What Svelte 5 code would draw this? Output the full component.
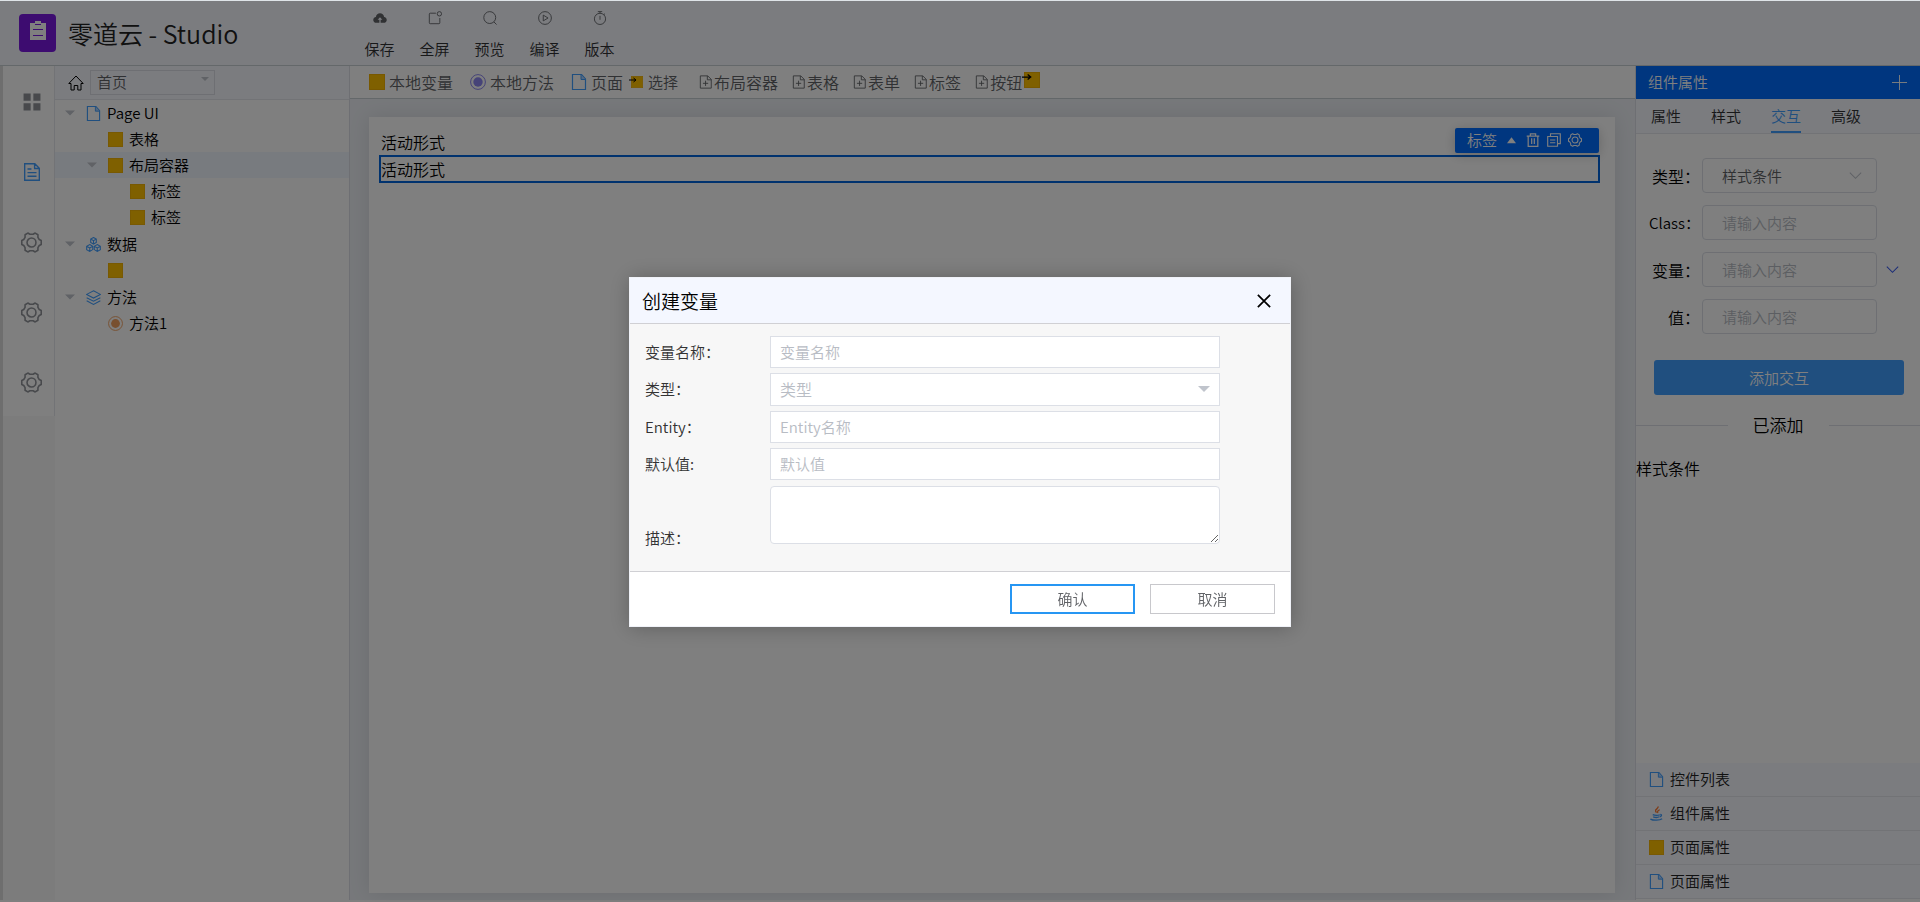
<script>
  const tools = [
    { icon: 'cloud', label: '保存' },
    { icon: 'full', label: '全屏' },
    { icon: 'search', label: '预览' },
    { icon: 'play', label: '编译' },
    { icon: 'timer', label: '版本' }
  ];

  const rail = ['grid', 'article', 'gear', 'gear', 'gear'];

  const tree = [
    [
      { level: 0, icon: 'doc', label: 'Page UI', open: true },
      { level: 1, icon: 'square', label: '表格' },
      { level: 1, icon: 'square', label: '布局容器', open: true, active: true },
      { level: 2, icon: 'square', label: '标签' },
      { level: 2, icon: 'square', label: '标签' }
    ],
    [
      { level: 0, icon: 'cubes', label: '数据', open: true },
      { level: 1, icon: 'square', label: '' }
    ],
    [
      { level: 0, icon: 'layers', label: '方法', open: true },
      { level: 1, icon: 'method', label: '方法1' }
    ]
  ];

  const widgets = ['布局容器', '表格', '表单', '标签', '按钮'];
  const tabs = ['属性', '样式', '交互', '高级'];

  const panels = [
    { icon: 'doc', label: '控件列表' },
    { icon: 'java', label: '组件属性' },
    { icon: 'square', label: '页面属性' },
    { icon: 'doc', label: '页面属性' }
  ];

  let activeTab = $state('交互');
  let showDialog = $state(true);

  const close = () => (showDialog = false);
</script>

{#snippet icon(name, size = 15)}
  <svg class="icon {name}" width={size} height={size} viewBox="0 0 16 16" fill="none" stroke="currentColor" stroke-width="1" aria-hidden="true">
    {#if name === 'square'}
      <rect x="0.5" y="0.5" width="15" height="15" fill="#ffc000" stroke="#f0b000" />
    {:else if name === 'doc'}
      <path d="M1.5 .5h9l4 4.5v10.5h-13z" stroke-width="1.2" />
      <path d="M10 .8V5.5h4.5" fill="#a8d0ff" />
    {:else if name === 'docplus'}
      <path d="M1.5 1h8.500l4 4v10h-12.500zM9.500 1v4.500H14M7.500 6.500v6M4.500 9.500h6" />
    {:else if name === 'method'}
      <circle cx="8" cy="8" r="7.400" />
      <circle cx="8" cy="8" r="4.700" fill="currentColor" stroke="none" />
    {:else if name === 'cloud'}
      <path d="M4 13.500C1.500 13.500.3 12 .3 10.200S1.600 7 3.300 6.800C3.700 4.200 5.600 2.700 8 2.700s4.300 1.500 4.700 4.100c1.700.2 3 1.600 3 3.400s-1.200 3.300-3.700 3.300H8.700V10h2L8 7.200 5.300 10h2v3.500z" fill="currentColor" stroke="none" />
    {:else if name === 'full'}
      <path d="M9 2.500H2.500a1 1 0 0 0-1 1v10a1 1 0 0 0 1 1h10a1 1 0 0 0 1-1V8" />
      <circle cx="13" cy="3.200" r="2.500" />
    {:else if name === 'search'}
      <circle cx="7.700" cy="7.500" r="6.800" />
      <path d="M12.500 12.500l3 3" />
    {:else if name === 'play'}
      <circle cx="8" cy="8" r="7.300" />
      <path d="M6 4.700v6.600L11.500 8z" />
    {:else if name === 'timer'}
      <circle cx="8" cy="9" r="6.400" />
      <path d="M5.500 .7h5M8 .7v2M8 5.500v4.500M12.500 3l1.200 1" />
    {:else if name === 'grid'}
      <path d="M.5.500h6.300v6.300H.5zM9.200.500h6.300v6.300H9.200zM.5 9.200h6.300v6.300H.5zM9.200 9.200h6.300v6.300H9.200z" fill="currentColor" stroke="none" />
    {:else if name === 'article'}
      <path d="M1.500.7h9l4 4v10.600h-13zM10.300.8v4.100h4M4 5.300h3.500M4 8.500h8M4 11.800h8" stroke-width="1.200" />
    {:else if name === 'gear'}
      <path d="M5.200.8L6.800 1.700h2.400L10.800.8l2.100 1.300v2l1 1.600 1.500.8v3l-1.500.8-1 1.600v2l-2.100 1.300-1.600-.9H6.800l-1.600.9-2.100-1.300v-2l-1-1.600-1.500-.8v-3l1.500-.8 1-1.600v-2z" stroke-width="1.200" stroke-linejoin="round" />
      <circle cx="8" cy="8" r="3.400" stroke-width="1.200" />
    {:else if name === 'cubes'}
      <path d="M8 .5l3 1.700v3.500L8 7.500 5 5.700V2.200zM5 2.200l3 1.700 3-1.700M8 3.900v3.600M4 8l3.200 1.800v3.600L4 15.400.7 13.500V9.800zM.7 9.800L4 11.600l3.200-1.800M4 11.600v3.800M12 8l3.300 1.800v3.700L12 15.400l-3.200-2V9.800zM8.800 9.800l3.200 1.800 3.300-1.800M12 11.600v3.800" stroke-width="1.100" />
    {:else if name === 'layers'}
      <path d="M8 .8l7.300 3.900L8 8.600.7 4.700zM.7 8.200L8 12l7.300-3.800M.7 11.500L8 15.400l7.300-3.900" stroke-width="1.100" />
    {:else if name === 'java'}
      <path d="M9.500.5c1.500 2-3.500 3-2.500 5l1 1.500M11.500 4c-2 .8-3 1.800-2 3.500" stroke="#ff7a30" stroke-width="1.400" />
      <path d="M4 9.300c2 .8 6 .8 7.500 0M12 9c2 .2 1.500 2-.5 2.500M4.500 11.500c2 .8 5 .8 6.500 0M1.500 14c3 1.600 10 1.600 12.500-.3" stroke-width="1.400" />
    {:else if name === 'home'}
      <path d="M.8 8.500L8 1l7.200 7.500H13V15H9.800v-4.500H6.200V15H3V8.500z" stroke-width="1" />
    {:else if name === 'trash'}
      <path d="M.8 3.500h14.400M2.500 3.500v11.700h11V3.500M5 3.500V1h6v2.500M6.500 6v6.500M9.500 6v6.500" stroke-width="1.400" />
    {:else if name === 'copy'}
      <path d="M4 4V.8h11.200v11.400H12M.8 4H12v11.200H.8zM3.500 8h6M3.500 11.200h6" stroke-width="1.300" />
    {:else if name === 'caret'}
      <path d="M0 4h16L8 12z" fill="currentColor" stroke="none" />
    {:else if name === 'caretup'}
      <path d="M0 13h16L8 2z" fill="currentColor" stroke="none" />
    {:else if name === 'chevron'}
      <path d="M1 4.500l7 7 7-7" stroke-width="1.300" />
    {:else if name === 'plus'}
      <path d="M8 0v16M0 8h16" />
    {:else if name === 'close'}
      <path d="M1 1l14 14M15 1L1 15" stroke-width="2" />
    {:else if name === 'arrow'}
      <path d="M0 8h14M9 4l5 4-5 4" stroke-width="2" />
    {/if}
  </svg>
{/snippet}

<div class="studio">
  <header>
    <div class="logo">
      <svg width="37" height="38" viewBox="0 0 37 38" aria-hidden="true">
        <path d="M11 9h5V7h6v2h5v17H11z" fill="#fff" />
        <path d="M16 10.500h6M14 15.500h10M14 21.500h10" stroke="#7a18e0" stroke-width="1.200" />
      </svg>
    </div>
    <h1>零道云 - Studio</h1>
    <nav class="tools">
      {#each tools as tool}
        <button>{@render icon(tool.icon, 14)}<span>{tool.label}</span></button>
      {/each}
    </nav>
  </header>

  <div class="workspace">
    <aside class="rail">
      <nav>
        {#each rail as name, i}
          <button class:current={i === 1} aria-label="菜单{i + 1}">{@render icon(name, i < 2 ? 18 : 21)}</button>
        {/each}
      </nav>
    </aside>

    <aside class="sidebar">
      <div class="page-bar">
        {@render icon('home', 16)}
        <div class="select page-select">
          <select aria-label="页面"><option>首页</option></select>
          {@render icon('caret', 8)}
        </div>
      </div>
      <div class="tree">
        {#each tree as group}
          <div>
            {#each group as node}
              <div class="node level{node.level}" class:active={node.active}>
                <span class="toggle">{#if node.open}{@render icon('caret', 10)}{/if}</span>
                {@render icon(node.icon, 15)}
                <span>{node.label}</span>
              </div>
            {/each}
          </div>
        {/each}
      </div>
    </aside>

    <main>
      <div class="toolbar">
        <button>{@render icon('square', 16)}本地变量</button>
        <button class="purple">{@render icon('method', 16)}本地方法</button>
        <button class="page">{@render icon('doc', 16)}页面</button>
        <button class="choose"><span class="mark">{@render icon('square', 12)}{@render icon('arrow', 8)}</span>选择</button>
        <div class="widgets">
          {#each widgets as widget}
            <button>{@render icon('docplus', 14)}{widget}</button>
          {/each}
          <span class="mark drag">{@render icon('square', 16)}{@render icon('arrow', 10)}</span>
        </div>
      </div>
      <div class="stage">
        <div class="paper">
          <div class="line">活动形式</div>
          <div class="line selected">
            活动形式
            <div class="actions">
              <span>标签</span>
              <button aria-label="上级">{@render icon('caretup', 9)}</button>
              <button aria-label="删除">{@render icon('trash', 14)}</button>
              <button aria-label="复制">{@render icon('copy', 14)}</button>
              <button aria-label="设置">{@render icon('gear', 14)}</button>
            </div>
          </div>
        </div>
      </div>
    </main>

    <aside class="props">
      <div class="props-title">组件属性 {@render icon('plus', 15)}</div>
      <div class="tabs">
        {#each tabs as tab}
          <button class:on={activeTab === tab} onclick={() => (activeTab = tab)}>{tab}</button>
        {/each}
      </div>
      <form class="props-form">
        <div class="field">
          <label for="kind">类型：</label>
          <div class="select">
            <select id="kind"><option>样式条件</option></select>
            {@render icon('chevron', 13)}
          </div>
        </div>
        <div class="field">
          <label for="cls">Class：</label>
          <input id="cls" placeholder="请输入内容" />
        </div>
        <div class="field">
          <label for="variable">变量：</label>
          <input id="variable" placeholder="请输入内容" />
          <button type="button" class="more" aria-label="展开">{@render icon('chevron', 13)}</button>
        </div>
        <div class="field">
          <label for="val">值：</label>
          <input id="val" placeholder="请输入内容" />
        </div>
        <button type="button" class="add">添加交互</button>
      </form>
      <div class="divider">已添加</div>
      <div class="added">样式条件</div>
      <div class="panels">
        {#each panels as panel}
          <button>{@render icon(panel.icon, 15)}{panel.label}</button>
        {/each}
      </div>
    </aside>
  </div>
</div>

{#if showDialog}
  <div class="mask">
    <div class="dialog" role="dialog" aria-labelledby="dialog-title">
      <div class="dialog-head">
        <h2 id="dialog-title">创建变量</h2>
        <button aria-label="关闭" onclick={close}>{@render icon('close', 14)}</button>
      </div>
      <div class="dialog-body">
        <div class="row">
          <label for="d-name">变量名称：</label>
          <input id="d-name" placeholder="变量名称" />
        </div>
        <div class="row">
          <label for="d-type">类型：</label>
          <div class="select">
            <select id="d-type"><option>类型</option></select>
            {@render icon('caret', 12)}
          </div>
        </div>
        <div class="row">
          <label for="d-entity">Entity：</label>
          <input id="d-entity" placeholder="Entity名称" />
        </div>
        <div class="row">
          <label for="d-default">默认值:</label>
          <input id="d-default" placeholder="默认值" />
        </div>
        <div class="row tall">
          <label for="d-desc">描述：</label>
          <textarea id="d-desc"></textarea>
        </div>
      </div>
      <div class="dialog-foot">
        <button class="primary" onclick={close}>确认</button>
        <button onclick={close}>取消</button>
      </div>
    </div>
  </div>
{/if}

<style>
  :global(body) {
    margin: 0;
    background: #fff;
    font: 350 15px/20px "Noto Sans CJK SC", "Open Sans", sans-serif;
    color: #000;
  }

  * {
    box-sizing: border-box;
  }

  button,
  input,
  select,
  textarea {
    font: inherit;
    color: inherit;
    margin: 0;
  }

  button {
    padding: 0;
    border: 0;
    background: none;
    cursor: pointer;
  }

  .icon {
    display: block;
    flex: none;
  }

  .doc,
  .cubes,
  .layers,
  .java {
    color: #409eff;
  }

  .studio {
    display: flex;
    flex-direction: column;
    height: 100vh;
    padding-bottom: 2px;
    border-top: 1px solid #dfe4e8;
  }

  /* header */
  header {
    display: flex;
    align-items: center;
    height: 65px;
    padding-left: 19px;
    background: #f6f8ff;
    border-bottom: 1px solid #c8d0d4;
  }

  .logo {
    width: 37px;
    height: 38px;
    border-radius: 4px;
    overflow: hidden;
    background: #7a18e0;
  }

  h1 {
    width: 284px;
    margin: 0 0 0 12px;
    font-size: 25px;
    font-weight: 350;
    line-height: 36px;
    color: #222;
  }

  .tools {
    display: flex;
    align-self: stretch;
  }

  .tools button {
    display: flex;
    flex-direction: column;
    align-items: center;
    gap: 14px;
    width: 55px;
    padding-top: 10px;
    color: #303133;
  }

  .tools .icon {
    color: #606266;
  }

  .workspace {
    display: flex;
    flex: 1;
    min-height: 0;
  }

  /* left rail */
  .rail {
    width: 55px;
    border-left: 3px solid #dcdcdc;
    background: #f9f9f9;
  }

  .rail nav {
    background: #fefefe;
    border-right: 1px solid #e4e7ed;
  }

  .rail button {
    display: grid;
    place-items: center;
    width: 100%;
    height: 70px;
    padding: 2px 4px 0 10px;
    color: #909399;
  }

  .rail .current {
    color: #409eff;
  }

  /* page tree */
  .sidebar {
    width: 295px;
    border-right: 1px solid #dcdfe6;
  }

  .page-bar {
    display: flex;
    align-items: center;
    gap: 6px;
    height: 34px;
    padding-left: 13px;
    background: #f6f8ff;
    border-bottom: 1px solid #e4e7ed;
  }

  .select {
    position: relative;
  }

  .select select {
    appearance: none;
    width: 100%;
    border: 1px solid #dcdfe6;
    background: #fff;
    color: #606266;
  }

  .select .icon {
    position: absolute;
    color: #c0c4cc;
    pointer-events: none;
  }

  .page-select select {
    width: 125px;
    height: 25px;
    padding: 0 6px 2px;
    background: #f6f8ff;
  }

  .page-select .icon {
    top: 5px;
    right: 6px;
  }

  .tree {
    display: flex;
    flex-direction: column;
    gap: 1px;
  }

  .node {
    display: flex;
    align-items: center;
    gap: 6px;
    height: 26px;
    padding-left: 10px;
  }

  .node.level1 {
    padding-left: 32px;
  }

  .node.level2 {
    padding-left: 54px;
  }

  .node.active {
    background: #f0f7ff;
  }

  .toggle {
    width: 15px;
    color: #c0c4cc;
  }

  .node .method {
    color: #f0a060;
  }

  /* designer */
  main {
    display: flex;
    flex: 1;
    flex-direction: column;
    min-width: 0;
  }

  .toolbar {
    display: flex;
    align-items: center;
    gap: 17px;
    height: 33px;
    padding: 0 0 1px 19px;
    border-bottom: 1px solid #c8d0d4;
    font-size: 16px;
    color: #606266;
    white-space: nowrap;
  }

  .toolbar button {
    display: flex;
    align-items: center;
    gap: 4px;
  }

  .toolbar .page {
    margin-right: -9px;
  }

  .toolbar .choose {
    gap: 5px;
    font-size: 15px;
  }

  .purple .icon {
    color: #8c86f0;
  }

  .widgets {
    display: flex;
    gap: 14px;
    margin-left: 4px;
  }

  .widgets button {
    gap: 1px;
  }

  .mark {
    position: relative;
  }

  .mark .arrow {
    position: absolute;
    top: 0;
    left: -2px;
    color: #000;
  }

  .drag {
    margin-left: -12px;
  }

  .stage {
    display: flex;
    flex: 1;
    padding: 18px 20px 7px 19px;
    background: #eef1f6;
  }

  .paper {
    flex: 1;
    padding: 12px 15px 0 10px;
    background: #fff;
    box-shadow: 0 0 20px rgba(0, 0, 0, 0.1);
  }

  .line {
    padding: 0 2px;
    font-size: 16px;
    line-height: 26px;
  }

  .selected {
    position: relative;
    padding: 0;
    border: 2px solid #0064dc;
    line-height: 24px;
  }

  .actions {
    position: absolute;
    top: -29px;
    right: -1px;
    display: flex;
    align-items: center;
    gap: 7px;
    width: 144px;
    height: 25px;
    padding: 0 0 1px 12px;
    border-radius: 2px;
    background: #006cff;
    box-shadow: 0 2px 12px rgba(0, 0, 0, 0.2);
    color: #fff;
    font-size: 15px;
  }

  .actions span,
  .actions button:first-of-type {
    margin-right: 3px;
  }

  /* properties */
  .props {
    display: flex;
    flex-direction: column;
    width: 285px;
    padding-bottom: 1px;
    border-left: 1px solid #dcdfe6;
  }

  .props-title {
    display: flex;
    align-items: center;
    justify-content: space-between;
    height: 33px;
    padding: 0 13px 1px 12px;
    background: #006cff;
    color: #fff;
  }

  .tabs {
    display: flex;
    gap: 30px;
    height: 35px;
    padding-left: 15px;
    background: #f6f8ff;
    border-bottom: 1px solid #e4e7ed;
  }

  .tabs button {
    padding-top: 2px;
    border-bottom: 2px solid transparent;
    color: #303133;
  }

  .tabs .on {
    border-color: #409eff;
    color: #409eff;
  }

  .props-form {
    display: flex;
    flex-direction: column;
    gap: 12px;
    padding: 24px 16px 0 12px;
  }

  .field {
    display: flex;
    align-items: center;
  }

  .field label {
    width: 54px;
    padding-right: 2px;
    font-size: 16px;
    text-align: right;
    white-space: nowrap;
  }

  .field label[for="cls"] {
    font-size: 15px;
  }

  .field .select,
  .field input {
    width: 175px;
  }

  .field select,
  .field input {
    height: 35px;
    padding: 0 19px;
    border: 1px solid #dcdfe6;
    border-radius: 4px;
    background: #fff;
  }

  .field .select .icon {
    top: 11px;
    right: 15px;
  }

  .field .more {
    margin-left: 9px;
    color: #3a5cf0;
  }

  input::placeholder {
    color: #b8bcc4;
    opacity: 1;
  }

  .add {
    height: 35px;
    margin: 14px 0 0 6px;
    border-radius: 3px;
    background: #409eff;
    color: #fff;
  }

  .divider {
    display: flex;
    align-items: center;
    gap: 25px;
    margin-top: 18px;
    font-size: 17px;
    line-height: 24px;
  }

  .divider::before,
  .divider::after {
    content: "";
    flex: 1;
    height: 1px;
    background: #dcdfe6;
  }

  .added {
    margin-top: 21px;
    font-size: 16px;
    line-height: 20px;
  }

  .panels {
    margin-top: auto;
  }

  .panels button {
    display: flex;
    align-items: center;
    gap: 6px;
    width: 100%;
    height: 34px;
    padding: 0 0 1px 13px;
    border-bottom: 1px solid #e4e7ed;
    background: #f6f8ff;
    color: #222;
  }

  /* create variable dialog */
  .mask {
    position: fixed;
    inset: 1px 0 0;
    display: grid;
    place-items: center;
    background: rgba(0, 0, 0, 0.5);
  }

  .dialog {
    width: 662px;
    border: 1px solid #f0f2f8;
    background: #fff;
    box-shadow: 1px 1px 20px rgba(0, 0, 0, 0.25);
  }

  .dialog-head {
    display: flex;
    align-items: center;
    justify-content: space-between;
    height: 46px;
    padding: 1px 19px 0 12px;
    border-bottom: 1px solid #d0d0d4;
    background: #f4f7ff;
  }

  h2 {
    margin: 0;
    font-size: 19px;
    font-weight: 350;
    line-height: 24px;
  }

  .dialog-body {
    display: flex;
    flex-direction: column;
    gap: 5px;
    padding: 12px 15px 23px;
    background: #f7f7f7;
  }

  .row {
    display: flex;
    align-items: center;
    color: #333;
  }

  .row label {
    width: 125px;
  }

  .row input,
  .row .select,
  .row textarea {
    width: 450px;
  }

  .row input,
  .row textarea {
    height: 32px;
    padding: 0 9px 1px;
    border: 1px solid #dcdfe6;
    background: #fff;
  }

  .row select {
    display: block;
    height: 33px;
    padding: 0 9px 1px;
    font-size: 16px;
    color: #b8bcc4;
  }

  .row .select .icon {
    top: 10px;
    right: 10px;
  }

  .row.tall {
    align-items: end;
    padding-top: 1px;
  }

  .row textarea {
    height: 58px;
    margin-bottom: 4px;
    border-radius: 4px;
  }

  .dialog-foot {
    display: flex;
    justify-content: end;
    gap: 15px;
    padding: 12px 15px;
    border-top: 1px solid #d0d0d4;
  }

  .dialog-foot button {
    width: 125px;
    height: 30px;
    border: 1px solid #c8c8cc;
    color: #606266;
  }

  .dialog-foot .primary {
    border: 2px solid #2696f3;
  }
</style>
